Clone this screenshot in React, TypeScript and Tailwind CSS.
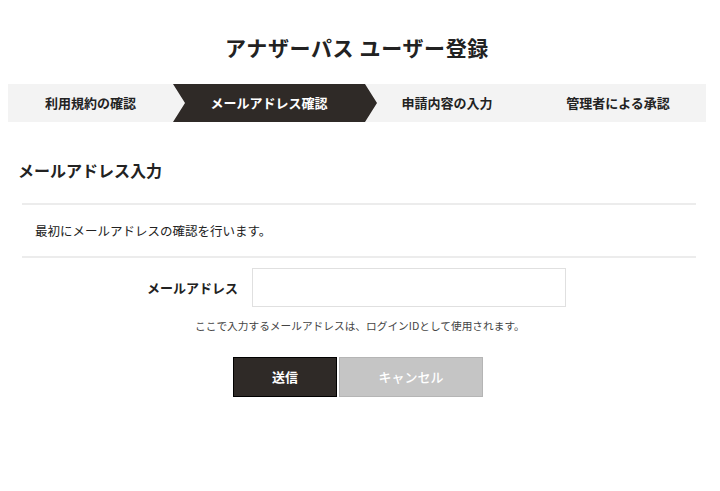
import React from 'react';

const font = { fontFamily: '"Noto Sans CJK JP", "Noto Sans", sans-serif' };

export default function App() {
  return (
    <div className="min-h-screen bg-white text-[#222]" style={font}>
      <div className="pl-[8px] pr-[14px]">
        {/* Title */}
        <h1 className="pt-[33px] text-center text-[21px] font-bold leading-[28px] tracking-[0.03em]">
          アナザーパス ユーザー登録
        </h1>

        {/* Steps */}
        <ol className="mt-[23px] flex h-[38px] bg-[#f3f3f3] text-[13px] font-bold">
          <li className="flex w-[165px] items-center justify-center">利用規約の確認</li>
          <li
            className="flex w-[204px] items-center justify-center bg-[#2f2a27] pr-[12px] text-white"
            style={{ clipPath: 'polygon(0 0, 192px 0, 100% 50%, 192px 100%, 0 100%, 12px 50%)' }}
          >
            メールアドレス確認
          </li>
          <li className="flex w-[140px] items-center justify-center">申請内容の入力</li>
          <li className="flex flex-1 items-center justify-center pl-[13px]">管理者による承認</li>
        </ol>

        {/* Section */}
        <h2 className="mt-[36px] pl-[10px] text-[16px] font-bold leading-[24px]">メールアドレス入力</h2>

        <div className="mt-[21px] ml-[14px] mr-[10px] border-y-2 border-[#ececec]">
          <p className="pt-[17px] pb-[16px] pl-[13px] text-[12.5px] leading-[18px]">最初にメールアドレスの確認を行います。</p>
        </div>

        {/* Form */}
        <div className="mt-[10px] flex items-center">
          <label className="w-[244px] pr-[14px] text-right text-[13px] font-bold">メールアドレス</label>
          <input
            type="email"
            className="h-[39px] w-[314px] border border-[#e0e0e0] bg-white px-2 outline-none"
          />
        </div>
        <p className="mt-[11px] pl-[187px] text-[10.7px] leading-[16px] text-[#444]">
          ここで入力するメールアドレスは、ログインIDとして使用されます。
        </p>

        <div className="mt-[23px] flex gap-[2px] pl-[225px]">
          <button className="h-[40px] w-[104px] border border-black bg-[#2f2a27] text-[13px] font-bold text-white">
            送信
          </button>
          <button className="h-[40px] w-[144px] border border-[#b5b5b5] bg-[#c5c5c5] text-[13px] font-medium text-white">
            キャンセル
          </button>
        </div>
      </div>
    </div>
  );
}
